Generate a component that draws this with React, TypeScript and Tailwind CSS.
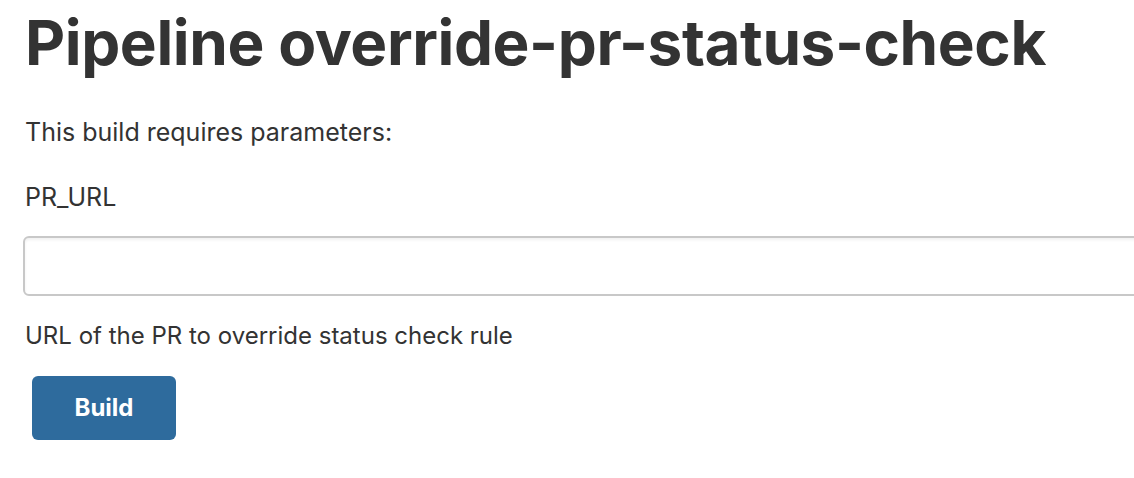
export default function App() {
  return (
    <div className="w-[1134px] h-[478px] overflow-hidden bg-white text-[#333333]" style={{ fontFamily: 'Inter, "Noto Sans", sans-serif' }}>
      <div className="pl-[25px] pt-[8px]">
        <h1 className="text-[62px] leading-[70px] font-bold tracking-[-0.4px]">Pipeline override-pr-status-check</h1>
        <p className="mt-[39px] text-[25px] leading-[30px]">This build requires parameters:</p>
        <div className="mt-[35px] text-[25px] leading-[30px]">PR_URL</div>
        <div className="mt-[24px] -ml-[2px]">
          <input type="text" className="block w-[1200px] h-[60px] border-2 border-[#c8c8c8] rounded-[6px] shadow-[inset_0_2px_3px_rgba(0,0,0,0.06)] outline-none" />
        </div>
        <div className="mt-[25px] text-[24px] leading-[30px]">URL of the PR to override status check rule</div>
        <button className="mt-[25px] ml-[7px] w-[144px] h-[64px] rounded-[6px] bg-[#2e6b9d] text-white text-[24px] font-bold">Build</button>
      </div>
    </div>
  );
}
